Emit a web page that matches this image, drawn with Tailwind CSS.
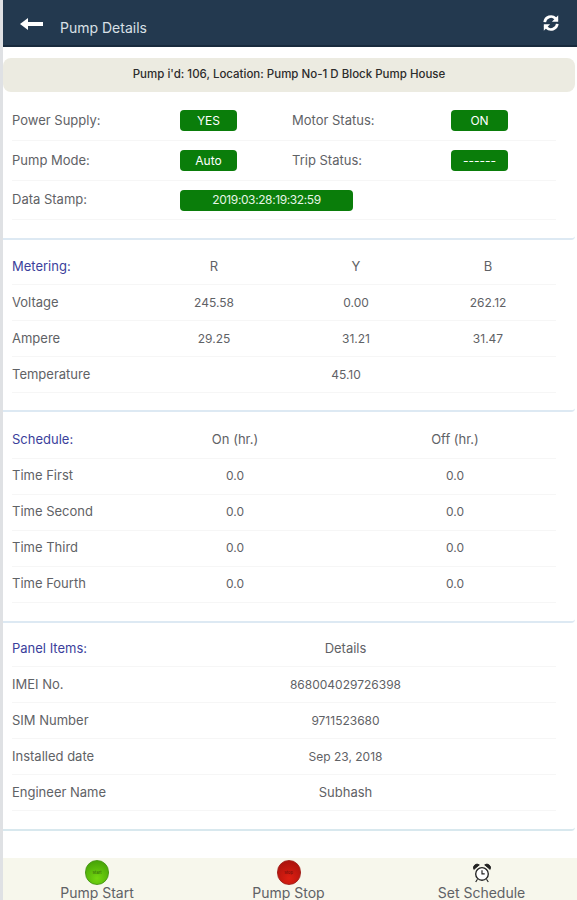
<!DOCTYPE html>
<html lang="en">
<head>
    <meta charset="UTF-8">
    <meta name="viewport" content="width=device-width, initial-scale=1.0">
    <script src="https://cdn.jsdelivr.net/npm/@tailwindcss/browser@4"></script>
    <title>Pump Details</title>
</head>
<body class="bg-white">
<div class="w-[577px] h-[900px] overflow-hidden flex flex-col font-['Inter',sans-serif] text-[13px] text-[#5f6266] border-l-[3px] border-[#dfe1e4]">

    <!-- header -->
    <div class="h-[47px] shrink-0 -ml-[3px] pl-[20px] pr-[17px] flex items-center bg-[#23394f] border-b-2 border-[#182a3d] text-[#d9e0e6]">
        <svg width="23" height="12" viewBox="0 0 23 12" class="mt-[3px]"><path d="M23 4H8V0L0 6l8 6V8h15z" fill="#fff"/></svg>
        <span class="ml-[17px] mt-[10px] text-[14px]">Pump Details</span>
        <svg width="18" height="18" viewBox="0 0 20 20" class="ml-auto" fill="none" stroke="#fff" stroke-width="3"><path d="M3 9a7 7 0 0 1 12-4l2 2"/><path d="M17 11a7 7 0 0 1-12 4l-2-2"/><path d="M18 1.500v7h-7z" fill="#fff" stroke="none"/><path d="M2 18.500v-7h7z" fill="#fff" stroke="none"/></svg>
    </div>

    <!-- pump id -->
    <div class="mt-[11px] mr-[2px] h-[34px] shrink-0 flex items-center justify-center rounded-[8px] bg-[#ecebe1] text-[#2c2c2c] text-[11.500px] font-medium">Pump i'd: 106, Location: Pump No-1 D Block Pump House</div>

    <!-- status -->
    <div class="mr-[2px] h-[148px] shrink-0 pl-[9px] pr-[19px] pt-[9px] bg-white rounded-br-[4px] border-b-2 border-[#dde9f3]">
        <div class="h-[40px] flex items-center border-b border-[#f6f6f6]">
            <span class="w-[168px]">Power Supply:</span>
            <span class="w-[57px] h-[21px] rounded-[4px] bg-[#0a7d0a] text-white text-[12px] flex items-center justify-center">YES</span>
            <span class="ml-[55px] w-[159px]">Motor Status:</span>
            <span class="w-[57px] h-[21px] rounded-[4px] bg-[#0a7d0a] text-white text-[12px] flex items-center justify-center">ON</span>
        </div>
        <div class="h-[40px] flex items-center border-b border-[#f6f6f6]">
            <span class="w-[168px]">Pump Mode:</span>
            <span class="w-[57px] h-[21px] rounded-[4px] bg-[#0a7d0a] text-white text-[12px] flex items-center justify-center">Auto</span>
            <span class="ml-[55px] w-[159px]">Trip Status:</span>
            <span class="w-[57px] h-[21px] rounded-[4px] bg-[#0a7d0a] text-white text-[12px] flex items-center justify-center">------</span>
        </div>
        <div class="h-[39px] flex items-center border-b border-[#f6f6f6]">
            <span class="w-[168px]">Data Stamp:</span>
            <span class="w-[173px] h-[21px] rounded-[4px] bg-[#0a7d0a] text-[#e6f5e6] text-[12px] tracking-[-0.4px] flex items-center justify-center">2019:03:28:19:32:59</span>
        </div>
    </div>

    <!-- metering -->
    <div class="mt-[2px] mr-[2px] h-[170px] shrink-0 pl-[9px] pr-[19px] pt-[7px] rounded-br-[4px] border-b-2 border-[#dde9f3]">
        <div class="h-[36px] flex items-center border-b border-[#f6f6f6]">
            <span class="w-[150px] text-[#3b3f9c]">Metering:</span>
            <span class="w-[104px] text-center">R</span><span class="w-[180px] text-center">Y</span><span class="w-[84px] text-center">B</span>
        </div>
        <div class="h-[36px] flex items-center border-b border-[#f6f6f6]">
            <span class="w-[150px]">Voltage</span>
            <span class="w-[104px] text-[12px] text-center">245.58</span><span class="w-[180px] text-[12px] text-center">0.00</span><span class="w-[84px] text-[12px] text-center">262.12</span>
        </div>
        <div class="h-[36px] flex items-center border-b border-[#f6f6f6]">
            <span class="w-[150px]">Ampere</span>
            <span class="w-[104px] text-[12px] text-center">29.25</span><span class="w-[180px] text-[12px] text-center">31.21</span><span class="w-[84px] text-[12px] text-center">31.47</span>
        </div>
        <div class="h-[36px] flex items-center border-b border-[#f6f6f6]">
            <span class="w-[150px]">Temperature</span>
            <span class="w-[368px] text-[12px] text-center">45.10</span>
        </div>
    </div>

    <!-- schedule -->
    <div class="mt-[3px] mr-[2px] h-[208px] shrink-0 pl-[9px] pr-[19px] pt-[8px] rounded-br-[4px] border-b-2 border-[#dde9f3]">
        <div class="h-[36px] pb-[2px] flex items-center border-b border-[#f6f6f6]">
            <span class="w-[172px] text-[#3b3f9c]">Schedule:</span>
            <span class="w-[102px] text-center">On (hr.)</span><span class="ml-[69px] w-[200px] text-center">Off (hr.)</span>
        </div>
        <div class="h-[36px] pb-[2px] flex items-center border-b border-[#f6f6f6]"><span class="w-[172px]">Time First</span><span class="w-[102px] text-[12px] text-center">0.0</span><span class="ml-[69px] w-[200px] text-[12px] text-center">0.0</span></div>
        <div class="h-[36px] pb-[2px] flex items-center border-b border-[#f6f6f6]"><span class="w-[172px]">Time Second</span><span class="w-[102px] text-[12px] text-center">0.0</span><span class="ml-[69px] w-[200px] text-[12px] text-center">0.0</span></div>
        <div class="h-[36px] pb-[2px] flex items-center border-b border-[#f6f6f6]"><span class="w-[172px]">Time Third</span><span class="w-[102px] text-[12px] text-center">0.0</span><span class="ml-[69px] w-[200px] text-[12px] text-center">0.0</span></div>
        <div class="h-[36px] pb-[2px] flex items-center border-b border-[#f6f6f6]"><span class="w-[172px]">Time Fourth</span><span class="w-[102px] text-[12px] text-center">0.0</span><span class="ml-[69px] w-[200px] text-[12px] text-center">0.0</span></div>
    </div>

    <!-- panel items -->
    <div class="mt-[3px] mr-[2px] h-[205px] shrink-0 pl-[9px] pr-[19px] pt-[5px] rounded-br-[4px] border-b-2 border-[#d8e8ee]">
        <div class="h-[36px] flex items-center border-b border-[#f6f6f6]"><span class="w-[200px] text-[#3b3f9c]">Panel Items:</span><span class="w-[267px] text-center">Details</span></div>
        <div class="h-[36px] flex items-center border-b border-[#f6f6f6]"><span class="w-[200px]">IMEI No.</span><span class="w-[267px] text-[12px] text-center">868004029726398</span></div>
        <div class="h-[36px] flex items-center border-b border-[#f6f6f6]"><span class="w-[200px]">SIM Number</span><span class="w-[267px] text-[12px] text-center">9711523680</span></div>
        <div class="h-[36px] flex items-center border-b border-[#f6f6f6]"><span class="w-[200px]">Installed date</span><span class="w-[267px] text-[12px] text-center">Sep 23, 2018</span></div>
        <div class="h-[36px] flex items-center border-b border-[#f6f6f6]"><span class="w-[200px]">Engineer Name</span><span class="w-[267px] text-center">Subhash</span></div>
    </div>

    <!-- bottom bar -->
    <div class="mt-[27px] flex-1 bg-[#f7f7ec] flex text-[14px] leading-[14px]">
        <div class="w-[188px] flex flex-col items-center">
            <div class="mt-[2px] w-[24px] h-[25px] rounded-full bg-[radial-gradient(circle_at_50%_75%,#73d80f,#3f9a06)] border border-[#4c9a1a] flex items-center justify-center text-[4px] leading-[4px] text-[#2d5a0a]">Start</div>
            <span class="mt-[1px]">Pump Start</span>
        </div>
        <div class="w-[195px] flex flex-col items-center">
            <div class="mt-[2px] w-[24px] h-[25px] rounded-full bg-[radial-gradient(circle_at_50%_75%,#de1f12,#a20f0b)] border border-[#a5251f] flex items-center justify-center text-[4px] leading-[4px] text-[#5e0a08]">Stop</div>
            <span class="mt-[1px]">Pump Stop</span>
        </div>
        <div class="w-[191px] flex flex-col items-center">
            <svg width="18" height="20" viewBox="0 0 20 22" class="mt-[5px]" fill="#fff" stroke="#222"><circle cx="10" cy="12" r="7" stroke-width="1.500"/><path d="M1 7a4 4 0 0 1 6-5z" fill="#222"/><path d="M19 7a4 4 0 0 0-6-5z" fill="#222"/><path d="M10 8v4h3M5 18l-2 3M15 18l2 3" fill="none" stroke-width="1.300"/></svg>
            <span class="mt-[3px]">Set Schedule</span>
        </div>
    </div>
</div>
</body>
</html>
